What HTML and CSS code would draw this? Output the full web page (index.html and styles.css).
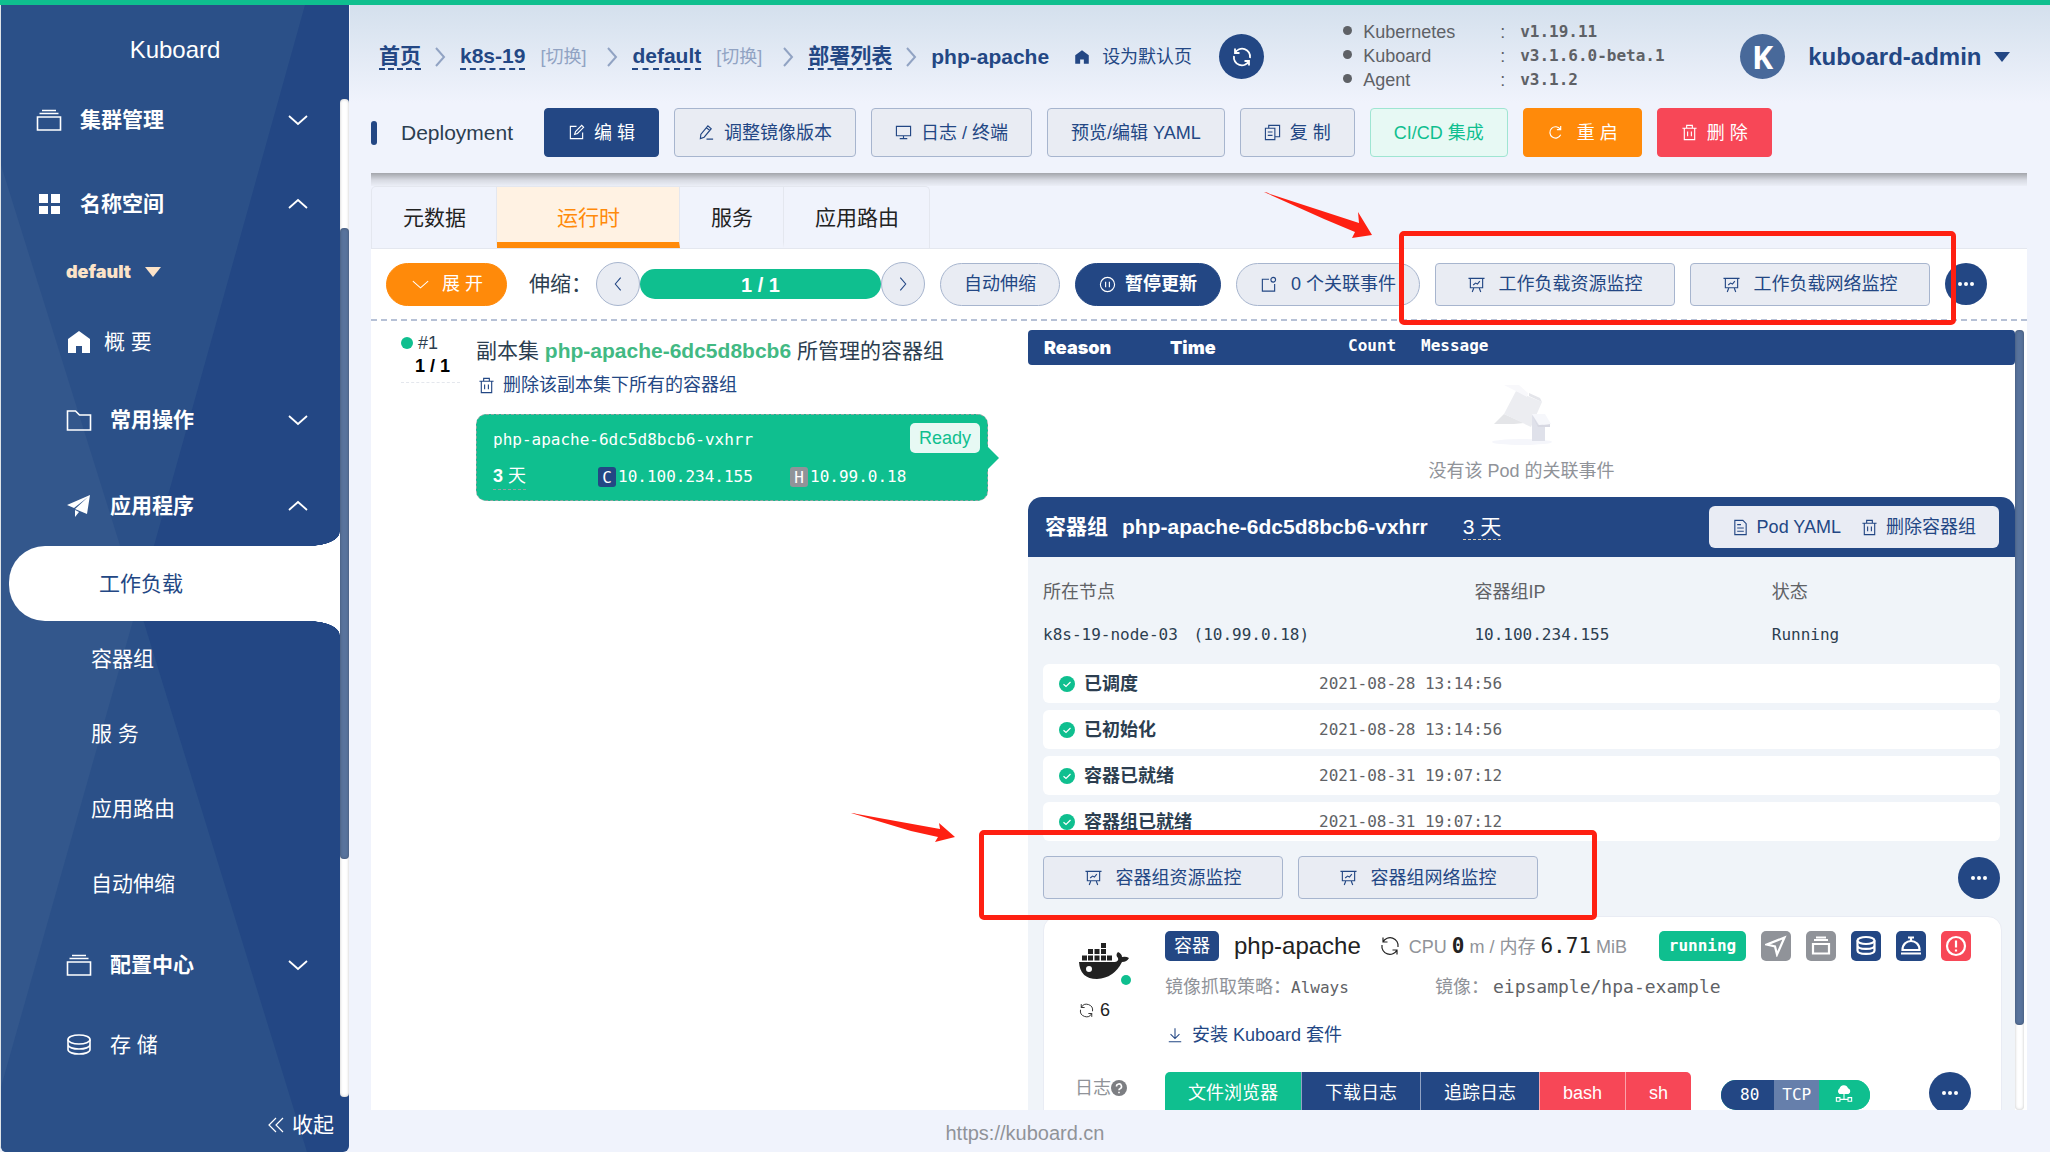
FILE: index.html
```html
<!DOCTYPE html>
<html lang="zh-CN">
<head>
<meta charset="utf-8">
<title>Kuboard</title>
<link rel="stylesheet" href="styles.css">
</head>
<body>
<svg class="sprite" aria-hidden="true">
  <symbol id="i-down" viewBox="0 0 20 20"><path d="M1 6l9 8 9-8"/></symbol>
  <symbol id="i-up" viewBox="0 0 20 20"><path d="M1 14l9-8 9 8"/></symbol>
  <symbol id="i-left" viewBox="0 0 20 20"><path d="M13 3L7 10l6 7"/></symbol>
  <symbol id="i-right" viewBox="0 0 20 20"><path d="M7 3l6 7-6 7"/></symbol>
  <symbol id="i-sep" viewBox="0 0 12 20"><path d="M2 1l8 9-8 9"/></symbol>
  <symbol id="i-box" viewBox="0 0 26 24"><path d="M6 2.500h14M3.500 5.500h19"/><path d="M1.500 9h23v13h-23z"/></symbol>
  <symbol id="i-grid" viewBox="0 0 26 24"><path class="solid" d="M3 2h9v9H3zM15 2h9v9h-9zM3 14h9v8H3zM15 14h9v8h-9z"/></symbol>
  <symbol id="i-home" viewBox="0 0 26 24"><path class="solid" d="M13 1L2 9v14h8v-7h6v7h8V9z"/></symbol>
  <symbol id="i-folder" viewBox="0 0 26 24"><path d="M1.500 3h8l4 4h11v15h-23z"/></symbol>
  <symbol id="i-plane" viewBox="0 0 26 24"><path class="solid" d="M24 1L1 11l7 3L22 3 9 15l12 5zM9 16v7l4-5z"/></symbol>
  <symbol id="i-coin" viewBox="0 0 26 24"><ellipse cx="13" cy="6.500" rx="11" ry="4.500"/><path d="M2 6.500v5c0 6 22 6 22 0v-5M2 11.500v5c0 6 22 6 22 0v-5"/></symbol>
  <symbol id="i-collapse" viewBox="0 0 20 20"><path d="M10 3l-7 7 7 7M17 3l-7 7 7 7"/></symbol>
  <symbol id="i-refresh" viewBox="0 0 20 20"><path d="M3 1.500V6h4.500M3 6A8 8 0 0 1 18 11M17 18.500V14h-4.500M17 14A8 8 0 0 1 2 9"/></symbol>
  <symbol id="i-edit" viewBox="0 0 18 18"><path d="M9 2.500H2.500v13h13V9"/><path d="M7 11l1-3 6.500-6.500 2 2L10 10z"/></symbol>
  <symbol id="i-pen" viewBox="0 0 18 18"><path d="M3 11L10.500 2l3.500 3-7.500 9-4 1.500zM9 4l3.500 3M9 16h7"/></symbol>
  <symbol id="i-monitor" viewBox="0 0 18 18"><path d="M1.500 2.500h15v10h-15zM9 12.500v3M5 15.500h8"/></symbol>
  <symbol id="i-copy" viewBox="0 0 18 18"><path d="M1.500 4.500h10v12h-10zM5 4V1.500h11.500v12h-5M4 8.500h5M4 12h5"/></symbol>
  <symbol id="i-restart" viewBox="0 0 18 18"><path d="M14.500 11.500a6 6 0 1 1-.5-6M14.500 2v4h-4"/></symbol>
  <symbol id="i-trash" viewBox="0 0 18 18"><path d="M1.500 4.500h15M6 4V1.500h6V4M3.500 5v11.500h11V5M7 8v5M11 8v5"/></symbol>
  <symbol id="i-pause" viewBox="0 0 18 18"><circle cx="9" cy="9" r="7.500"/><path d="M7 6v6M11 6v6"/></symbol>
  <symbol id="i-event" viewBox="0 0 18 18"><path d="M9.500 3.500h-7v12.500h13V8.500"/><circle cx="14" cy="4" r="2.500"/></symbol>
  <symbol id="i-chart" viewBox="0 0 18 18"><path d="M.5 2.500h17M2.500 3v9.500h13V3M6 13l-1.500 4M12 13l1.500 4M5.500 9.500l2.500-2 2 1 2.500-3"/></symbol>
  <symbol id="i-dots" viewBox="0 0 18 18"><circle class="solid" cx="3" cy="9" r="2"/><circle class="solid" cx="9" cy="9" r="2"/><circle class="solid" cx="15" cy="9" r="2"/></symbol>
  <symbol id="i-doc" viewBox="0 0 18 18"><path d="M3 1.500h8.500L15 5v11.500H3zM5.500 6h4M5.500 9.500h7M5.500 13h7"/></symbol>
  <symbol id="i-check" viewBox="0 0 16 16"><circle class="solid" cx="8" cy="8" r="8"/><path class="tick" d="M4.500 8.200l2.500 2.300 4.500-4.500"/></symbol>
  <symbol id="i-download" viewBox="0 0 18 18"><path d="M9 1.500v11M4 8l5 5 5-5M2 16.500h14"/></symbol>
  <symbol id="i-nav" viewBox="0 0 22 22"><path d="M19.500 2.500L2 9.500l8 2 2 8z"/></symbol>
  <symbol id="i-tray" viewBox="0 0 22 22"><path d="M6 2.500h10M4 5h14M3 9h16v9.500H3z"/></symbol>
  <symbol id="i-db" viewBox="0 0 22 22"><ellipse cx="11" cy="5.500" rx="8.500" ry="3.500"/><path d="M2.500 5.500v5c0 4.500 17 4.500 17 0v-5M2.500 10.500v5c0 4.500 17 4.500 17 0v-5"/></symbol>
  <symbol id="i-dish" viewBox="0 0 22 22"><path d="M2.500 15c0-12 17-12 17 0zM1 18.500h20M8 2.500h6M11 3v3"/></symbol>
  <symbol id="i-warn" viewBox="0 0 22 22"><circle cx="11" cy="11" r="9"/><path d="M11 5.500v7M11 14.500v2"/></symbol>
  <symbol id="i-help" viewBox="0 0 16 16"><circle class="solid" cx="8" cy="8" r="8"/><path class="tick" d="M5.500 6.500a2.500 2.500 0 1 1 3.500 2.200Q8 9 8 10.200M8 11.700v1.500"/></symbol>
  <symbol id="i-cloud" viewBox="0 0 20 20"><path class="solid" d="M5 10a3.500 3.500 0 0 1 0-6 5 5 0 0 1 9.500-.5A3.500 3.500 0 0 1 15 10z"/><path d="M10 10v6M5 16h10M1.500 14h4v4h-4zM14.500 14h4v4h-4z"/></symbol>
</svg>
<div class="topbar"></div>
<div class="app">
  <aside class="sidebar">
    <svg class="facets" viewBox="0 0 348 1147" preserveAspectRatio="none" aria-hidden="true">
      <path fill="#2b5088" d="M0 0H304L137 598L306 1147H0z"/>
      <path fill="#33578c" d="M0 160L137 598L0 1082z"/>
    </svg>
    <h1 class="brand">Kuboard</h1>
    <div class="menu-wrap">
      <nav class="menu">
        <a class="item top" href="#"><svg class="mi"><use href="#i-box"/></svg><b>集群管理</b><svg class="chev"><use href="#i-down"/></svg></a>
        <a class="item top" href="#"><svg class="mi"><use href="#i-grid"/></svg><b>名称空间</b><svg class="chev"><use href="#i-up"/></svg></a>
        <button class="ns" type="button">default <i class="caret"></i></button>
        <a class="item mid near" href="#"><svg class="mi"><use href="#i-home"/></svg><span>概 要</span></a>
        <a class="item mid spaced" href="#"><svg class="mi"><use href="#i-folder"/></svg><b>常用操作</b><svg class="chev"><use href="#i-down"/></svg></a>
        <a class="item mid" href="#"><svg class="mi"><use href="#i-plane"/></svg><b>应用程序</b><svg class="chev"><use href="#i-up"/></svg></a>
        <div class="subs">
          <a class="item sub active" href="#">工作负载</a>
          <a class="item sub" href="#">容器组</a>
          <a class="item sub" href="#">服 务</a>
          <a class="item sub" href="#">应用路由</a>
          <a class="item sub" href="#">自动伸缩</a>
        </div>
        <a class="item mid" href="#"><svg class="mi"><use href="#i-box"/></svg><b>配置中心</b><svg class="chev"><use href="#i-down"/></svg></a>
        <a class="item mid" href="#"><svg class="mi"><use href="#i-coin"/></svg><span>存 储</span></a>
      </nav>
      <div class="track side-track"><div class="thumb"></div></div>
    </div>
    <button class="collapse" type="button"><svg><use href="#i-collapse"/></svg>收起</button>
  </aside>

  <div class="page">
    <header class="head">
      <div class="crumbs-row">
        <nav class="crumbs">
          <a href="#">首页</a><svg class="sep"><use href="#i-sep"/></svg>
          <a href="#">k8s-19</a><a class="switch" href="#">[切换]</a><svg class="sep wide"><use href="#i-sep"/></svg>
          <a href="#">default</a><a class="switch" href="#">[切换]</a><svg class="sep wide"><use href="#i-sep"/></svg>
          <a href="#">部署列表</a><svg class="sep"><use href="#i-sep"/></svg>
          <strong>php-apache</strong>
        </nav>
        <button class="set-home" type="button"><svg><use href="#i-home"/></svg>设为默认页</button>
        <button class="round refresh" type="button" aria-label="刷新"><svg><use href="#i-refresh"/></svg></button>
        <ul class="versions">
          <li><span>Kubernetes</span><i>:</i><code>v1.19.11</code></li>
          <li><span>Kuboard</span><i>:</i><code>v3.1.6.0-beta.1</code></li>
          <li><span>Agent</span><i>:</i><code>v3.1.2</code></li>
        </ul>
        <button class="user" type="button"><span class="avatar">K</span>kuboard-admin <i class="caret"></i></button>
      </div>
      <div class="actions">
        <span class="kind">Deployment</span>
        <button class="btn navy" type="button"><svg><use href="#i-edit"/></svg>编 辑</button>
        <button class="btn" type="button"><svg><use href="#i-pen"/></svg>调整镜像版本</button>
        <button class="btn" type="button"><svg><use href="#i-monitor"/></svg>日志 / 终端</button>
        <button class="btn" type="button">预览/编辑 YAML</button>
        <button class="btn" type="button"><svg><use href="#i-copy"/></svg>复 制</button>
        <button class="btn mint" type="button">CI/CD 集成</button>
        <button class="btn orange" type="button"><svg><use href="#i-restart"/></svg>重 启</button>
        <button class="btn red" type="button"><svg><use href="#i-trash"/></svg>删 除</button>
      </div>
    </header>

    <main class="main">
      <div class="tabs" role="tablist">
        <button type="button" role="tab">元数据</button>
        <button type="button" role="tab" class="on" aria-selected="true">运行时</button>
        <button type="button" role="tab">服务</button>
        <button type="button" role="tab">应用路由</button>
      </div>
      <div class="panel">
        <div class="toolbar">
          <button class="btn pill orange" type="button"><svg><use href="#i-down"/></svg>展 开</button>
          <div class="scale">
            <span class="scale-label">伸缩：</span>
            <button class="round pale" type="button" aria-label="减少"><svg><use href="#i-left"/></svg></button>
            <div class="bar">1 / 1</div>
            <button class="round pale" type="button" aria-label="增加"><svg><use href="#i-right"/></svg></button>
          </div>
          <button class="btn pill" type="button">自动伸缩</button>
          <button class="btn pill navy" type="button"><svg><use href="#i-pause"/></svg><b>暂停更新</b></button>
          <button class="btn pill events" type="button"><svg><use href="#i-event"/></svg>0 个关联事件</button>
          <div class="monitors">
            <button class="btn monitor" type="button"><svg><use href="#i-chart"/></svg>工作负载资源监控</button>
            <button class="btn monitor" type="button"><svg><use href="#i-chart"/></svg>工作负载网络监控</button>
            <span class="mark mark-top"></span>
            <svg class="arrow arrow-top" viewBox="0 0 108 46" aria-hidden="true"><path d="M0 0Q3 0 6 2L95 31l-1-11 14 23-20 3 3-6L60 27z"/></svg>
          </div>
          <button class="round" type="button" aria-label="更多"><svg><use href="#i-dots"/></svg></button>
        </div>

        <div class="columns">
          <section class="replicas">
            <div class="rev">
              <div class="rev-no"><i class="dot"></i>#1</div>
              <strong>1 / 1</strong>
            </div>
            <div class="rs">
              <h2>副本集 <b>php-apache-6dc5d8bcb6</b> 所管理的容器组</h2>
              <a class="rs-del" href="#"><svg><use href="#i-trash"/></svg>删除该副本集下所有的容器组</a>
              <article class="pod-card">
                <div class="pod-top"><code>php-apache-6dc5d8bcb6-vxhrr</code><span class="ready">Ready</span></div>
                <div class="pod-bottom">
                  <span class="age"><b>3</b> 天</span>
                  <code class="ip"><i class="tag-c">C</i>10.100.234.155</code>
                  <code class="ip"><i class="tag-h">H</i>10.99.0.18</code>
                </div>
              </article>
            </div>
          </section>

          <section class="detail">
            <div class="detail-body">
              <table class="event-head">
                <thead><tr><th class="c1">Reason</th><th class="c2">Time</th><th class="c3">Count</th><th class="c4">Message</th></tr></thead>
              </table>
              <div class="empty">
                <svg class="empty-pic" viewBox="0 0 60 60" aria-hidden="true">
                  <ellipse cx="30" cy="57" rx="30" ry="3" fill="#f5f6fb"/>
                  <path fill="#e4e5e8" d="M2 39L12 29L32 38L22 39z"/>
                  <path fill="#ecedf1" d="M24 6L50 17L39 42L12 29z"/>
                  <path fill="#f8f8fb" d="M12 0L27 0L36 8L35 12L24 6z"/>
                  <path fill="#e4e5ea" d="M37 8L48 13L50 17L37 11z"/>
                  <path fill="#dfe1ea" d="M40 30L53 41V56H40z"/>
                  <path fill="#d7d8e2" d="M40 30L46 40L58 39V42L46 42z"/>
                  <path fill="#f6f7fb" d="M40 29L53 29L59 39L47 40z"/>
                </svg>
                <p>没有该 Pod 的关联事件</p>
              </div>
              <article class="pod">
                <header class="pod-head">
                  <h3>容器组</h3><h3>php-apache-6dc5d8bcb6-vxhrr</h3><span class="age">3 天</span>
                  <div class="pod-actions">
                    <button type="button"><svg><use href="#i-doc"/></svg>Pod YAML</button>
                    <button type="button"><svg><use href="#i-trash"/></svg>删除容器组</button>
                  </div>
                </header>
                <div class="pod-body">
                  <dl class="facts">
                    <div><dt>所在节点</dt><dd>k8s-19-node-03 <span class="node-ip">(10.99.0.18)</span></dd></div>
                    <div><dt>容器组IP</dt><dd>10.100.234.155</dd></div>
                    <div><dt>状态</dt><dd>Running</dd></div>
                  </dl>
                  <ul class="conds">
                    <li><svg><use href="#i-check"/></svg><b>已调度</b><time>2021-08-28 13:14:56</time></li>
                    <li><svg><use href="#i-check"/></svg><b>已初始化</b><time>2021-08-28 13:14:56</time></li>
                    <li><svg><use href="#i-check"/></svg><b>容器已就绪</b><time>2021-08-31 19:07:12</time></li>
                    <li><svg><use href="#i-check"/></svg><b>容器组已就绪</b><time>2021-08-31 19:07:12</time></li>
                  </ul>
                  <div class="pod-monitor">
                    <div class="monitors">
                      <button class="btn monitor" type="button"><svg><use href="#i-chart"/></svg>容器组资源监控</button>
                      <button class="btn monitor" type="button"><svg><use href="#i-chart"/></svg>容器组网络监控</button>
                      <span class="mark mark-pod"></span>
                      <svg class="arrow arrow-pod" viewBox="0 0 104 30" aria-hidden="true"><path d="M0 0Q3 0 6 1L89 16l-1-6 16 14-20 5 3-5L60 18z"/></svg>
                    </div>
                    <button class="round" type="button" aria-label="更多"><svg><use href="#i-dots"/></svg></button>
                  </div>
                  <section class="container">
                    <div class="c-side">
                      <div class="whale">
                        <svg viewBox="0 0 50 36" aria-hidden="true"><path d="M22 0h5v5h-5zM9 6h5v5H9zM15.500 6h5v5h-5zM22 6h5v5h-5zM3 12.500h5v5H3zM9 12.500h5v5H9zM15.500 12.500h5v5h-5zM22 12.500h5v5h-5zM28 12.500h5v5h-5z"/><path fill-rule="evenodd" d="M0 19h36q4-1 3-4-3-3 0-6 4 2 4 5 4-1 7 1-2 4-7 4-8 16-25 17Q1 36 0 19zM10 23a3 3 0 1 0 0 6 3 3 0 0 0 0-6z"/></svg>
                        <i class="dot"></i>
                      </div>
                      <div class="restarts"><svg><use href="#i-refresh"/></svg>6</div>
                      <div class="log-label">日志<svg><use href="#i-help"/></svg></div>
                    </div>
                    <div class="c-main">
                      <div class="c-title">
                        <span class="c-tag">容器</span>
                        <span class="c-name">php-apache</span>
                        <svg class="c-refresh"><use href="#i-refresh"/></svg>
                        <span class="usage">CPU <code><b>0</b></code> m / 内存 <code>6.71</code> MiB</span>
                        <span class="running">running</span>
                        <span class="badges">
                          <i class="gray"><svg><use href="#i-nav"/></svg></i>
                          <i class="gray"><svg><use href="#i-tray"/></svg></i>
                          <i><svg><use href="#i-db"/></svg></i>
                          <i><svg><use href="#i-dish"/></svg></i>
                          <i class="alert"><svg><use href="#i-warn"/></svg></i>
                        </span>
                      </div>
                      <div class="c-meta"><span class="policy">镜像抓取策略：<code>Always</code></span><span>镜像：<code class="image">eipsample/hpa-example</code></span></div>
                      <a class="install" href="#"><svg><use href="#i-download"/></svg>安装 Kuboard 套件</a>
                      <div class="c-foot">
                        <div class="group">
                          <button class="green" type="button">文件浏览器</button><button type="button">下载日志</button><button type="button">追踪日志</button><button class="redb" type="button">bash</button><button class="redb" type="button">sh</button>
                        </div>
                        <div class="port"><span>80</span><span class="tcp">TCP</span><span class="net"><svg><use href="#i-cloud"/></svg></span></div>
                        <button class="round" type="button" aria-label="更多"><svg><use href="#i-dots"/></svg></button>
                      </div>
                    </div>
                  </section>
                </div>
              </article>
            </div>
            <div class="track detail-track"><div class="thumb"></div></div>
          </section>
        </div>
      </div>
    </main>
  </div>
  <footer class="foot"><a href="https://kuboard.cn">https://kuboard.cn</a></footer>
</div>
</body>
</html>
```
FILE: styles.css
```css
* { box-sizing: border-box; }
body {
  margin: 0; height: 100vh; overflow: hidden; display: flex; flex-direction: column;
  font: 18px/24px "Liberation Sans", "Noto Sans CJK SC", sans-serif;
  color: #2c3e50; background: #f0f3fc;
}
button { font: inherit; color: inherit; background: none; border: 0; padding: 0; margin: 0; }
a { color: inherit; text-decoration: none; }
h1, h2, h3, p, ul, dl, dd { margin: 0; padding: 0; list-style: none; font-weight: normal; }
i { font-style: normal; }
code, time, dd { font-family: "DejaVu Sans Mono", "Noto Sans CJK SC", monospace; font-size: 16px; }
svg { fill: none; stroke: currentColor; stroke-width: 1.2; width: 18px; height: 18px; flex: none; }
.solid { fill: currentColor; stroke: none; }
.tick { stroke: #fff; }
.sprite { width: 0; height: 0; position: absolute; }
.caret { border: 8px solid transparent; border-top: 10px solid currentColor; border-bottom: 0; display: inline-block; }
.dot { width: 12px; height: 12px; border-radius: 50%; background: #0fbf8f; }

.topbar { height: 5px; flex: none; background: #0fbf8f; }
.app { flex: 1; min-height: 0; display: grid; grid-template-columns: 350px 1fr; grid-template-rows: minmax(0, 1fr) 42px; position: relative; }

/* sidebar */
.sidebar { grid-row: 1 / 3; position: relative; display: flex; flex-direction: column; color: #fff; background: #234784; border-left: 1px solid #dfe4e8; border-radius: 0 0 6px 6px; overflow: hidden; font-size: 21px; margin-right: 1px; min-height: 0; }
.facets { position: absolute; inset: 0; width: 100%; height: 100%; stroke: none; }
.brand { position: relative; font-size: 24px; line-height: 28px; text-align: center; padding: 31px 0 16px; }
.menu-wrap { position: relative; flex: 1; min-height: 0; display: flex; }
.menu { flex: 1; overflow: hidden; }
.item { display: flex; align-items: center; height: 80px; padding-right: 32px; }
.item .mi { width: 26px; height: 24px; stroke-width: 1.6; }
.item.top { padding-left: 35px; margin-bottom: 4px; }
.item.top b { margin-left: 18px; }
.item.mid { padding-left: 65px; }
.item.mid b, .item.mid span { margin-left: 18px; }
.item.near { height: 77px; }
.item.near span { margin-left: 12px; }
.item .chev { width: 20px; height: 20px; margin-left: auto; stroke-width: 1.8; }
.spaced { margin-bottom: 6px; }
.ns { display: flex; align-items: center; gap: 14px; height: 48px; margin: 0 0 7px 65px; color: #fce3c8; font: 900 18px/24px Inter, "Open Sans", sans-serif; }
.subs { margin-bottom: 4px; }
.item.sub { padding-left: 90px; height: 75px; }
.item.active { position: relative; background: #fff; color: #234784; margin-left: 8px; border-radius: 36px 0 0 36px; }
.active::before, .active::after { content: ""; position: absolute; right: 0; width: 30px; height: 14px; }
.active::before { bottom: 100%; background: radial-gradient(ellipse 30px 14px at 0 0, transparent 98%, #fff 100%); }
.active::after { top: 100%; background: radial-gradient(ellipse 30px 14px at 0 100%, transparent 98%, #fff 100%); }
.track { width: 9px; border-radius: 4px; background: #fff; display: grid; box-shadow: inset 0 0 3px rgba(0, 0, 0, .25); }
.side-track { grid-template-rows: 129fr 631fr 238fr; margin-top: 19px; }
.thumb { grid-row: 2; border-radius: 4px; background: #58739c; box-shadow: inset 0 0 3px rgba(0, 0, 0, .3); }
.collapse { position: relative; align-self: flex-end; display: flex; align-items: center; gap: 6px; height: 55px; padding-right: 15px; }
.collapse svg { width: 20px; height: 20px; }

/* header */
.page { display: flex; flex-direction: column; min-width: 0; min-height: 0; padding: 0 23px 0 21px; background: linear-gradient(#d4e0ed, #f0f3fc 98px); }
.head { padding-bottom: 16px; position: relative; flex: none; }
.head::after { content: ""; position: absolute; left: 0; right: 0; top: 100%; height: 13px; background: linear-gradient(rgba(0, 0, 0, .32), rgba(0, 0, 0, .1) 55%, rgba(0, 0, 0, .02)); }
.crumbs-row { display: flex; align-items: center; height: 103px; color: #234784; }
.crumbs { display: flex; align-items: center; font-size: 21px; font-weight: bold; padding-left: 8px; }
.crumbs a { border-bottom: 2px dashed #234784; line-height: 24px; }
.crumbs strong { line-height: 24px; }
.crumbs .switch { font-size: 18px; font-weight: normal; color: #91a3c3; border: 0; margin-left: 15px; }
.sep { width: 12px; height: 20px; margin: 0 14px 0 13px; stroke: #91a3c3; stroke-width: 2; }
.sep.wide { margin-left: 20px; }
.set-home { display: flex; align-items: center; gap: 12px; margin-left: 25px; }
.set-home svg { width: 16px; height: 16px; }
.round { width: 42px; height: 42px; border-radius: 50%; background: #234784; color: #fff; display: grid; place-items: center; flex: none; }
.round.refresh { width: 45px; height: 45px; margin-left: 27px; }
.refresh svg { width: 20px; height: 20px; stroke-width: 1.8; }
.versions { margin: 0 0 2px 79px; color: #5e6166; width: 393px; }
.versions li { display: grid; grid-template-columns: 137px 20px 1fr; align-items: center; line-height: 24px; padding-left: 20px; position: relative; }
.versions li::before { content: ""; position: absolute; left: 0; top: 6px; width: 9px; height: 9px; border-radius: 50%; background: #5e6166; }
.versions code { font-weight: bold; }
.user { display: flex; align-items: center; font-size: 24px; font-weight: bold; margin-left: 4px; }
.user .caret { margin-left: 13px; }
.avatar { width: 45px; height: 45px; border-radius: 50%; background: #48699a; color: #fff; font: bold 32px/45px "Open Sans", sans-serif; margin-right: 23px; }

.actions { display: flex; align-items: center; gap: 15px; }
.kind { font-size: 21px; padding-left: 30px; margin-right: 16px; position: relative; }
.kind::before { content: ""; position: absolute; left: 0; top: 0; width: 6px; height: 24px; border-radius: 3px; background: #234784; }
.btn { display: flex; align-items: center; justify-content: center; gap: 9px; height: 49px; padding: 0 23px; border: 1px solid #a7b5ce; border-radius: 4px; background: #e9ecf3; color: #234784; white-space: nowrap; flex: none; }
.btn svg { width: 17px; height: 17px; }
.navy { background: #234784; border-color: #234784; color: #fff; }
.mint { background: #e7f9f4; border-color: #9fe5d2; color: #0fbf8f; }
.orange { background: #ff8a0a; border-color: #ff8a0a; color: #fff; }
.red { background: #f74757; border-color: #f74757; color: #fff; }
.btn.orange { gap: 13px; }

/* tabs */
.main { flex: 1; min-height: 0; display: flex; flex-direction: column; padding-top: 13px; }
.tabs { display: flex; flex: none; font-size: 21px; color: #222; margin-right: auto; border: 1px solid #e4e7ef; border-bottom: 0; border-radius: 5px 5px 0 0; background: #f0f3fc; position: relative; }
.tabs button { height: 61px; padding: 6px 30px 0 31px; border-right: 1px solid #e4e7ef; border-bottom: 6px solid transparent; }
.tabs button:last-child { border-right: 0; }
.tabs .on { padding: 6px 59px 0 60px; background: #fff2e3; color: #ff8a0a; border-bottom-color: #ff8a0a; }
.panel { flex: 1; min-height: 0; background: #fff; border-top: 1px solid #e4e7ef; display: flex; flex-direction: column; }

.toolbar { display: flex; align-items: center; height: 72px; padding-left: 15px; gap: 15px; border-bottom: 2px dashed #b6c1d6; flex: none; position: relative; z-index: 2; }
.toolbar .btn, .monitor.btn { height: 43px; }
.btn.pill { border-radius: 22px; }
.pill.orange { padding: 0 23px 0 25px; }
.pill.events { gap: 14px; }
.scale { display: flex; align-items: center; margin-left: 7px; }
.scale-label { font-size: 21px; width: 67px; white-space: nowrap; }
.round.pale { width: 44px; height: 44px; background: #e9ecf3; border: 1px solid #a7b5ce; color: #234784; }
.bar { width: 241px; height: 30px; border-radius: 15px; background: #0fbf8f; color: #fff; font: bold 20px/32px "Liberation Sans", sans-serif; text-align: center; }
.monitors { position: relative; display: flex; gap: 15px; }
.monitor.btn { width: 240px; gap: 14px; }
.mark { position: absolute; border: 5px solid #fe2012; border-radius: 5px; pointer-events: none; }
.mark-top { inset: -32px -26px -19px -36px; }
.mark-pod { inset: -26px -59px -21px -64px; }
.arrow { position: absolute; fill: #fe2012; stroke: none; }
.arrow-top { width: 108px; height: 46px; left: -171px; top: -71px; }
.arrow-pod { width: 104px; height: 30px; left: -192px; top: -43px; }

/* left column */
.columns { flex: 1; min-height: 0; display: grid; grid-template-columns: 657fr 999fr; grid-template-rows: minmax(0, 1fr); overflow: hidden; }
.replicas { display: flex; padding: 9px 40px 0 30px; gap: 16px; }
.rev { width: 59px; height: 53px; border-bottom: 1px dashed #e4e7ed; flex: none; }
.rev-no { display: flex; align-items: center; gap: 5px; line-height: 26px; }
.rev strong { display: block; padding-left: 14px; line-height: 20px; color: #000; }
.rs { flex: 1; min-width: 0; }
.rs h2 { font-size: 21px; line-height: 30px; padding-top: 6px; white-space: nowrap; }
.rs h2 b { color: #42b983; }
.rs-del { display: flex; align-items: center; gap: 8px; margin-top: 6px; line-height: 26px; color: #234784; padding-left: 2px; }
.pod-card { position: relative; margin-top: 16px; height: 87px; border: 1px dashed #8fa3a0; border-radius: 10px; background: #0fbf8f; color: #fff; padding: 8px 7px 0 16px; }
.pod-card::after { content: ""; position: absolute; left: 100%; top: 31px; border: 12px solid transparent; border-left: 12px solid #0fbf8f; border-right: 0; }
.pod-top { display: flex; justify-content: space-between; height: 30px; line-height: 34px; }
.ready { width: 70px; height: 30px; line-height: 31px; text-align: center; border-radius: 5px; background: #e7f9f4; color: #0fbf8f; }
.pod-bottom { display: grid; grid-template-columns: 105px 192px 1fr; padding-top: 11px; line-height: 26px; }
.pod-bottom .age { justify-self: start; border-bottom: 1px dashed #8fa3a0; line-height: 25px; }
.ip { display: flex; align-items: center; gap: 2px; }
.ip i { width: 18px; height: 20px; line-height: 22px; text-align: center; border-radius: 3px; background: #234784; }
.ip .tag-h { background: #909399; }

/* detail column */
.detail { display: flex; min-height: 0; padding: 9px 3px 0 0; }
.detail-body { flex: 1; min-width: 0; }
.detail-track { grid-template-rows: 696fr 85fr; }
.detail-track .thumb { grid-row: 1; }
.event-head { width: 100%; height: 35px; border-spacing: 0; table-layout: fixed; background: #234784; color: #fff; border-radius: 4px; }
.event-head th { text-align: left; padding: 0; font: 900 18px/24px Inter, "Open Sans", sans-serif; }
.event-head .c1 { width: 142px; padding-left: 16px; }
.event-head .c2 { width: 178px; }
.event-head .c3 { width: 73px; }
.event-head .c3, .event-head .c4 { font: bold 16px/24px "DejaVu Sans Mono", monospace; padding-bottom: 3px; }
.empty { display: flex; flex-direction: column; align-items: center; height: 132px; padding-top: 20px; color: #909399; }
.empty-pic { width: 60px; height: 60px; stroke: none; margin-bottom: 14px; }
.pod-head { height: 60px; display: flex; align-items: center; padding: 0 16px 0 17px; border-radius: 14px 14px 0 0; background: #234784; color: #fff; font-size: 21px; }
.pod-head h3 { font-size: 21px; font-weight: bold; margin-right: 14px; }
.pod-head .age { margin-left: 21px; border-bottom: 1px dashed #d9c9ae; }
.pod-actions { margin-left: auto; height: 42px; display: flex; gap: 20px; padding: 0 23px; border-radius: 6px; background: #e9ecf4; color: #234784; font-size: 18px; }
.pod-actions button { display: flex; align-items: center; gap: 8px; }
.pod-actions svg, .rs-del svg { width: 17px; height: 17px; }
.pod-body { background: #f0f4f9; padding: 23px 15px 0 15px; }
.facts { display: grid; grid-template-columns: 431fr 297fr 228fr; }
.facts dt { color: #606266; line-height: 24px; }
.facts dd { line-height: 24px; padding: 19px 0 17px; }
.node-ip { margin-left: 6px; }
.conds { display: grid; gap: 7px; }
.conds li { display: flex; align-items: center; height: 39px; padding-left: 16px; background: #fff; border-radius: 6px; }
.conds svg { width: 16px; height: 16px; color: #0fbf8f; }
.conds b { width: 235px; margin-left: 9px; }
.conds time { color: #606266; }
.pod-monitor { display: flex; align-items: center; justify-content: space-between; padding: 15px 0 17px; position: relative; z-index: 2; }
.container { display: flex; background: #fff; border: 1px solid #e9ecf4; border-radius: 14px; padding: 14px 27px 24px 35px; margin-right: -2px; }
.c-side { width: 86px; flex: none; display: flex; flex-direction: column; align-items: flex-start; }
.whale { display: flex; position: relative; color: #222; margin-top: 12px; }
.whale svg { width: 50px; height: 36px; fill: #222; stroke: none; }
.whale .dot { position: absolute; right: -2px; top: 32px; width: 10px; height: 10px; }
.restarts { display: flex; align-items: center; gap: 6px; color: #222; margin-top: 19px; line-height: 24px; }
.restarts svg { width: 15px; height: 15px; }
.log-label { display: flex; align-items: center; color: #909399; margin: 54px 0 0 -4px; line-height: 24px; }
.log-label svg { width: 16px; height: 16px; color: #7c7e82; stroke-width: 1.6; }
.c-main { flex: 1; min-width: 0; }
.c-title { display: flex; align-items: center; height: 30px; white-space: nowrap; color: #222; }
.c-tag { width: 54px; height: 30px; line-height: 30px; text-align: center; border-radius: 5px; background: #234784; color: #fff; }
.c-name { font-size: 24px; margin-left: 15px; }
.c-refresh { width: 20px; height: 20px; margin: 0 9px 0 19px; }
.usage { color: #909399; }
.usage code { font-size: 21px; color: #222; }
.running { margin-left: auto; width: 87px; height: 30px; border-radius: 5px; background: #0fbf8f; color: #fff; font: bold 16px/30px "DejaVu Sans Mono", monospace; text-align: center; }
.badges { display: flex; gap: 15px; margin: 0 3px 0 15px; }
.badges i { width: 30px; height: 30px; border-radius: 5px; background: #234784; color: #fff; display: grid; place-items: center; }
.badges svg { width: 22px; height: 22px; stroke-width: 2.2; }
.badges .gray { background: #909399; }
.badges .alert { background: #f74757; }
.c-meta { display: flex; margin-top: 14px; line-height: 24px; color: #909399; }
.c-meta code { color: #606266; }
.policy { width: 270px; }
.c-meta .image { font-size: 18px; margin-left: 4px; }
.install { display: inline-flex; align-items: center; gap: 9px; margin-top: 23px; padding-left: 2px; color: #234784; line-height: 24px; }
.install svg { width: 16px; height: 16px; }
.c-foot { display: flex; align-items: flex-start; margin-top: 23px; }
.group { display: flex; border-radius: 5px; overflow: hidden; color: #fff; }
.group button { height: 42px; padding: 0 23px; background: #234784; border-left: 1px solid #91a3c3; }
.group .green { background: #0fbf8f; border: 0; }
.group .redb { background: #f74757; border-left-color: #fba3ab; }
.port { display: flex; margin: 8px 0 0 30px; height: 30px; border-radius: 15px; overflow: hidden; color: #fff; background: #0fbf8f; font: 16px/30px "DejaVu Sans Mono", monospace; }
.port span { padding: 0 8px; background: #234784; }
.port span:first-child { padding: 0 15px 0 19px; }
.port .tcp { background: #667fab; }
.port .net { background: #0fbf8f; padding: 5px 17px 0 16px; line-height: 0; }
.c-foot .round { margin-left: auto; margin-right: 3px; }

.foot { position: absolute; inset: auto 0 0 0; height: 42px; line-height: 46px; font-size: 20px; text-align: center; color: #909399; pointer-events: none; }
.foot a { pointer-events: auto; }
```
